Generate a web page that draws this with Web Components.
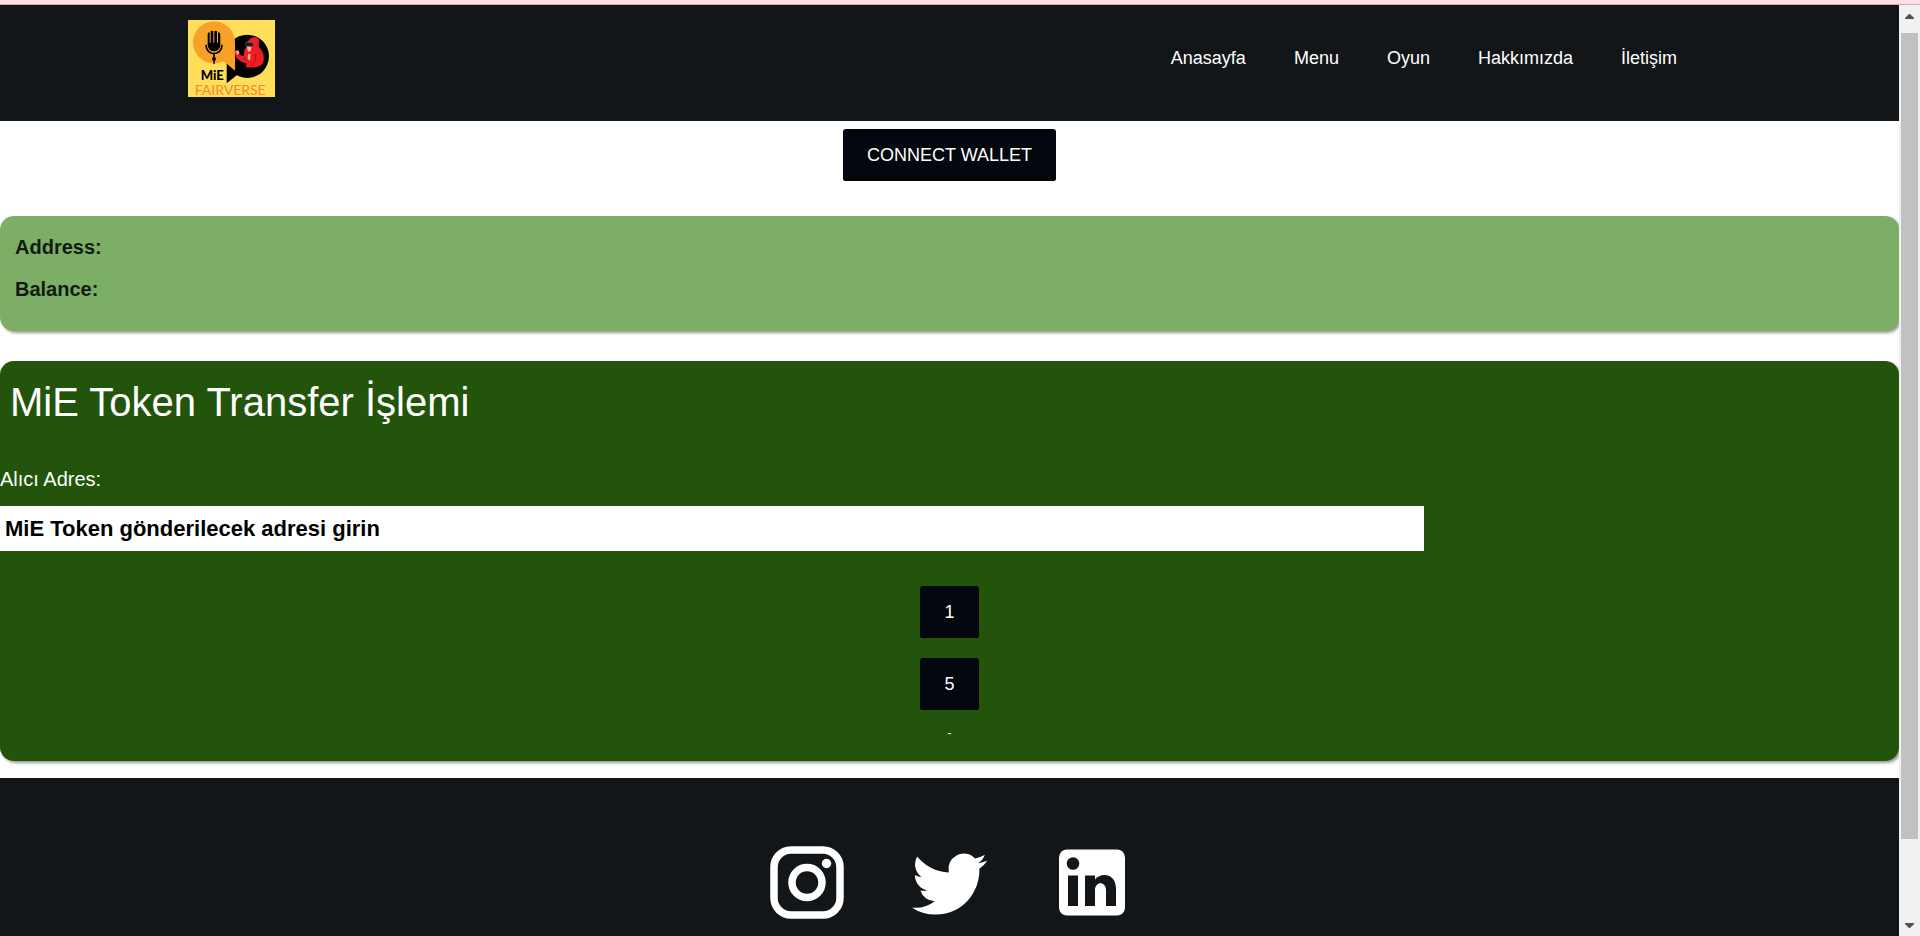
<!DOCTYPE html>
<html lang="tr">
<head>
<meta charset="utf-8">
<meta name="viewport" content="width=device-width, initial-scale=1">
<title>MiE Fairverse</title>
<style>
  html, body { margin: 0; height: 100%; overflow: hidden; }
  body { font-family: "Liberation Sans", Arial, sans-serif; background: #fff; }
</style>
</head>
<body>
<app-window>
  <site-header>
    <nav-link href="#anasayfa">Anasayfa</nav-link>
    <nav-link href="#menu">Menu</nav-link>
    <nav-link href="#oyun">Oyun</nav-link>
    <nav-link href="#hakkimizda">Hakkımızda</nav-link>
    <nav-link href="#iletisim">İletişim</nav-link>
  </site-header>
  <main>
    <wallet-bar><dark-button>CONNECT WALLET</dark-button></wallet-bar>
    <account-card></account-card>
    <transfer-card>
      <dark-button>1</dark-button>
      <dark-button>5</dark-button>
    </transfer-card>
  </main>
  <site-footer></site-footer>
</app-window>

<script>
function define(name, html) {
  const template = document.createElement('template');
  template.innerHTML = html;
  customElements.define(name, class extends HTMLElement {
    constructor() {
      super();
      this.attachShadow({ mode: 'open' }).append(template.content.cloneNode(true));
    }
    connectedCallback() {
      const link = this.shadowRoot.querySelector('a[data-host-link]');
      if (link) link.setAttribute('href', this.getAttribute('href') || '#');
    }
  });
}

define('scroll-rail', `
<style>
  :host { display: flex; flex-direction: column; align-items: center; width: 21px; box-sizing: border-box; background: #f1f1f1; }
  svg { display: block; width: 9px; height: 5px; fill: #505050; padding: 9px 0 14px; }
  svg.down { padding: 14px 0 8px; }
  .track { flex: 1; align-self: stretch; padding: 0 2px; }
  .thumb { height: 92%; background: #c1c1c1; }
</style>
<svg viewBox="0 0 9 5"><path d="M4 0h1l4 4v1H0V4z"/></svg>
<div class="track"><div class="thumb"></div></div>
<svg class="down" viewBox="0 0 9 5"><path d="M0 0h9v1L5 5H4L0 1z"/></svg>`);

define('app-window', `
<style>
  :host { display: flex; flex-direction: column; height: 100vh; overflow: hidden; }
  .strip { flex: none; height: 4px; background: #ffdfe4; border-bottom: 1px solid #c9aeb3; }
  .view { flex: 1; min-height: 0; display: flex; }
  .page { flex: 1; min-width: 0; overflow: hidden; display: flex; flex-direction: column; }
</style>
<div class="strip"></div>
<div class="view">
  <div class="page"><slot></slot></div>
  <scroll-rail aria-hidden="true"></scroll-rail>
</div>`);

define('brand-logo', `
<style>
  :host { display: block; }
  a, svg { display: block; }
  svg { width: 87px; height: 77px; }
</style>
<a href="#anasayfa" aria-label="MiE Fairverse">
<svg viewBox="0 0 261 231">
  <path fill="#ffde59" d="M0 0h261v231H0z"/>
  <circle cx="178" cy="109" r="65"/>
  <path fill="#f7a128" d="M141 67v88l-36-32z"/>
  <circle cx="78" cy="67" r="63" fill="#f7a128"/>
  <path d="M116 131l36 30-36 29z"/>
  <path d="M59 43a6 6 0 0 1 6-6v31h3V34a6 6 0 0 1 8 0v34h3V34a6 6 0 0 1 8 0v34h3V37a7 7 0 0 1 7 7v31a19 19 0 0 1-38 0z"/>
  <path d="M54 74c0 36 48 36 48 0M78 102v18" fill="none" stroke="#000" stroke-width="5"/>
  <circle cx="78" cy="117" r="6"/><path d="M76 118h4v14h-4z"/>
  <path fill="#ee1c25" d="M186 57c8-9 24-8 27 3 1 8-3 14 0 22 12 11 17 24 13 45-9 18-34 16-52 15l1-13c-10 2-29-10-33-23l-2-14 11-2 3 14 14 5c-2-15 3-25 12-30l-4-12z"/>
  <path fill="#ffb29a" d="M176 79l15 3-3 11-8 2zM143 93l8-1 4 8-7 5zM180 101l8 2-2 18-7-4z"/>
  <path fill="#17191c" stroke="#777" d="M172 66l22 3 3 10-24-1z"/>
  <path stroke="#8d0b10" stroke-width="2" fill="none" d="M190 137c10-7 14-20 12-34M165 113l14 8"/>
  <text x="38" y="181" font-family="Lato, sans-serif" font-weight="900" font-size="39">MiE</text>
  <text x="20" y="225" font-family="Lato, sans-serif" font-size="42" fill="#f58634">FAIRVERSE</text>
</svg></a>`);

define('site-header', `
<style>
  :host { flex: none; display: flex; justify-content: space-between; align-items: flex-start; padding: 15px 222px 24px 188px; background: #121619; }
  nav { display: flex; gap: 48px; padding-top: 26px; }
</style>
<brand-logo></brand-logo>
<nav><slot></slot></nav>`);

define('nav-link', `
<style>
  :host { display: block; }
  a { display: block; color: #fff; font-size: 18px; line-height: 24px; text-decoration: none; }
</style>
<a data-host-link><slot></slot></a>`);

define('dark-button', `
<style>
  :host { display: block; }
  button { display: block; margin: 0; border: 0; border-radius: 3px; padding: 14px 24px; background: #02060d; box-shadow: inset 0 -4px 0 #020408; color: #fff; font-family: inherit; font-size: 18px; line-height: 24px; }
</style>
<button type="button"><slot></slot></button>`);

define('wallet-bar', `
<style>
  :host { display: flex; justify-content: center; padding: 8px 0 35px; }
</style>
<slot></slot>`);

define('account-card', `
<style>
  :host { display: block; margin-bottom: 30px; padding: 16px 15px 27px; border-radius: 14px; background: #7caf65; box-shadow: 2px 2px 3px rgba(0,0,0,.4); color: #121a10; }
  dl { margin: 0; display: grid; gap: 12px; }
  dt { font-size: 20px; line-height: 30px; font-weight: 700; }
  dd { margin: 0; }
  .row { display: flex; gap: 8px; }
</style>
<dl>
  <div class="row"><dt>Address:</dt><dd></dd></div>
  <div class="row"><dt>Balance:</dt><dd></dd></div>
</dl>`);

define('transfer-card', `
<style>
  :host { display: block; margin-bottom: 17px; border-radius: 14px; background: #22540b; box-shadow: 2px 2px 3px rgba(0,0,0,.4); color: #fff; }
  h1 { margin: 0; padding: 17px 10px 38px; font-size: 40px; line-height: 48px; font-weight: 400; }
  label { display: block; font-size: 20px; line-height: 30px; padding-bottom: 12px; }
  input { display: block; width: 75%; height: 45px; box-sizing: border-box; margin: 0; border: 0; border-radius: 0; padding: 0 5px; background: #fff; color: #000; font-family: inherit; font-size: 22px; font-weight: 700; }
  input::placeholder { color: #000; opacity: 1; }
  .amounts { display: flex; flex-direction: column; align-items: center; gap: 20px; padding-top: 35px; }
  p { margin: 0; padding: 15px 0 20px; text-align: center; font-size: 12px; line-height: 16px; }
</style>
<h1>MiE Token Transfer İşlemi</h1>
<label for="to">Alıcı Adres:</label>
<input id="to" type="text" placeholder="MiE Token gönderilecek adresi girin">
<div class="amounts"><slot></slot></div>
<p>-</p>`);

define('site-footer', `
<style>
  :host { flex: 1 0 auto; display: flex; justify-content: center; align-items: flex-start; gap: 68px; padding: 67px 0 16px; background: #121619; }
  a { display: block; color: #fff; }
  svg { display: block; width: 75px; height: 75px; fill: currentColor; }
</style>
<a href="#instagram" aria-label="Instagram"><svg viewBox="0 0 75 75">
  <rect x="5" y="5" width="66" height="65" rx="17" fill="none" stroke="currentColor" stroke-width="7.500"/>
  <circle cx="38" cy="37.500" r="15" fill="none" stroke="currentColor" stroke-width="7.500"/>
  <circle cx="57.500" cy="18.500" r="4.700"/></svg></a>
<a href="#twitter" aria-label="Twitter"><svg viewBox="0 -0.5 24 24"><path d="M23.953 4.57a10 10 0 01-2.825.775 4.958 4.958 0 002.163-2.723c-.951.555-2.005.959-3.127 1.184a4.92 4.92 0 00-8.384 4.482C7.69 8.095 4.067 6.13 1.64 3.162a4.822 4.822 0 00-.666 2.475c0 1.71.87 3.213 2.188 4.096a4.904 4.904 0 01-2.228-.616v.06a4.923 4.923 0 003.946 4.827 4.996 4.996 0 01-2.212.085 4.936 4.936 0 004.604 3.417 9.867 9.867 0 01-6.102 2.105c-.39 0-.779-.023-1.17-.067a13.995 13.995 0 007.557 2.209c9.053 0 13.998-7.496 13.998-13.985 0-.21 0-.42-.015-.63A9.935 9.935 0 0024 4.59z"/></svg></a>
<a href="#linkedin" aria-label="LinkedIn"><svg viewBox="0 0 75 75">
  <rect x="4" y="4.500" width="66" height="66" rx="8"/>
  <g fill="#121619"><circle cx="18" cy="18.500" r="6.300"/><path d="M13 30.500h10V61H13zM30 30.500h10v4c6-7.500 21-6 21 9V61H51V45c0-9-11-9-11 0v16H30z"/></g></svg></a>`);
</script>
</body>
</html>
